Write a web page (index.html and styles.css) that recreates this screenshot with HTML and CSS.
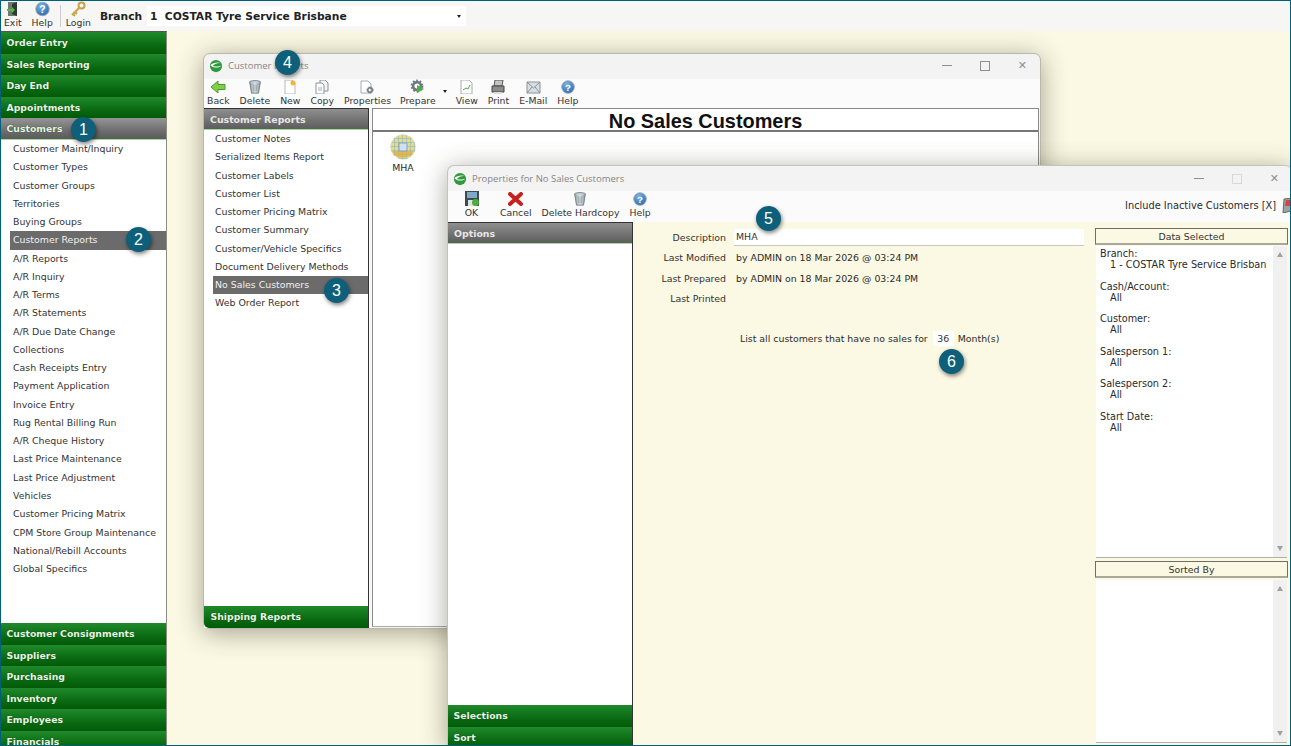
FILE: index.html
```html
<!DOCTYPE html>
<html lang="en">

<head>
    <meta charset="UTF-8" />
    <title>COSTAR Tyre Service</title>
    <link rel="stylesheet" href="styles.css">
</head>

<body>
    <svg width="0" height="0" class="defs">
        <defs>
            <radialGradient id="g-help" cx="40%" cy="30%" r="75%">
                <stop offset="0" stop-color="#7fb6e6" />
                <stop offset="1" stop-color="#2a68ad" />
            </radialGradient>
            <linearGradient id="g-trash" x1="0" x2="1" y1="0" y2="0">
                <stop offset="0" stop-color="#8f9ca1" />
                <stop offset=".5" stop-color="#dfe7ea" />
                <stop offset="1" stop-color="#87959a" />
            </linearGradient>
            <symbol id="i-help" viewBox="0 0 16 16">
                <circle cx="8" cy="8" r="7.200" fill="url(#g-help)" stroke="#9aa7b2" />
                <text x="8" y="12" text-anchor="middle" font-size="11" font-weight="bold" fill="#fff" font-family="Liberation Sans">?</text>
            </symbol>
            <symbol id="i-trash" viewBox="0 0 16 16">
                <ellipse cx="8" cy="2.500" rx="6.500" ry="1.800" fill="#c9d3d6" stroke="#6f7d82" />
                <path d="M2 3l2 12h8l2-12" fill="url(#g-trash)" stroke="#6f7d82" />
                <path d="M6 5l.5 8M10 5l-.5 8M8 5v8" stroke="#7c8a8f" stroke-width=".6" />
            </symbol>
            <symbol id="i-logo" viewBox="0 0 16 16">
                <circle cx="8" cy="8" r="7" fill="#2f9a3c" />
                <path d="M1.500 7c3-3 9-4 13-2-3-1-8 0-10 3 3 1 7 1 10-1-2 3-9 4-13 0z" fill="#fff" />
            </symbol>
            <symbol id="i-gear" viewBox="0 0 16 16">
                <circle cx="8" cy="8" r="4.500" fill="none" stroke="#6f7a80" stroke-width="3" />
                <circle cx="8" cy="8" r="6.300" fill="none" stroke="#6f7a80" stroke-width="2" stroke-dasharray="2 2" />
            </symbol>
        </defs>
    </svg>

    <div class="app">
        <div class="topbar">
            <div class="tool">
                <svg width="14" height="16" viewBox="0 0 14 16"><path d="M2 1h9v14H2z" fill="#6d7a70" /><path d="M6 3l5-2v14l-5-2z" fill="#2c3a30" /><path d="M1 8h5V6l3 3-3 3v-2H1z" fill="#56b848" /></svg>
                <span>Exit</span>
            </div>
            <div class="tool">
                <svg width="15" height="16"><use href="#i-help" /></svg>
                <span>Help</span>
            </div>
            <div class="top-sep"></div>
            <div class="tool">
                <svg width="16" height="16" viewBox="0 0 16 16"><circle cx="11.500" cy="4.500" r="3" fill="none" stroke="#c9a24a" stroke-width="2" /><path d="M9 7l-7 7M3 13l2 2M5 11l2 2" stroke="#c9a24a" stroke-width="2" fill="none" /></svg>
                <span>Login</span>
            </div>
            <div class="branch-label">Branch</div>
            <div class="branch-select">
                <span>1&nbsp; COSTAR Tyre Service Brisbane</span>
                <i class="arrow-down"></i>
            </div>
        </div>

        <div class="main">
            <div class="sidebar">
                <div class="nav-head">Order Entry</div>
                <div class="nav-head">Sales Reporting</div>
                <div class="nav-head">Day End</div>
                <div class="nav-head">Appointments</div>
                <div class="nav-head active">Customers</div>
                <div class="nav-list">
                    <div class="nav-item">Customer Maint/Inquiry</div>
                    <div class="nav-item">Customer Types</div>
                    <div class="nav-item">Customer Groups</div>
                    <div class="nav-item">Territories</div>
                    <div class="nav-item">Buying Groups</div>
                    <div class="nav-item selected">Customer Reports</div>
                    <div class="nav-item">A/R Reports</div>
                    <div class="nav-item">A/R Inquiry</div>
                    <div class="nav-item">A/R Terms</div>
                    <div class="nav-item">A/R Statements</div>
                    <div class="nav-item">A/R Due Date Change</div>
                    <div class="nav-item">Collections</div>
                    <div class="nav-item">Cash Receipts Entry</div>
                    <div class="nav-item">Payment Application</div>
                    <div class="nav-item">Invoice Entry</div>
                    <div class="nav-item">Rug Rental Billing Run</div>
                    <div class="nav-item">A/R Cheque History</div>
                    <div class="nav-item">Last Price Maintenance</div>
                    <div class="nav-item">Last Price Adjustment</div>
                    <div class="nav-item">Vehicles</div>
                    <div class="nav-item">Customer Pricing Matrix</div>
                    <div class="nav-item">CPM Store Group Maintenance</div>
                    <div class="nav-item">National/Rebill Accounts</div>
                    <div class="nav-item">Global Specifics</div>
                </div>
                <div class="nav-head">Customer Consignments</div>
                <div class="nav-head">Suppliers</div>
                <div class="nav-head">Purchasing</div>
                <div class="nav-head">Inventory</div>
                <div class="nav-head">Employees</div>
                <div class="nav-head">Financials</div>
            </div>
            <div class="desktop"></div>
        </div>

        <!-- Customer Reports window -->
        <div class="window win-reports">
            <div class="titlebar">
                <svg width="14" height="14"><use href="#i-logo" /></svg>
                <span class="win-title">Customer Reports</span>
                <div class="win-buttons">
                    <span class="win-min"></span><span class="win-max"></span><span class="win-close">&#10005;</span>
                </div>
            </div>
            <div class="toolbar">
                <div class="tool tool-back">
                    <svg width="16" height="14" viewBox="0 0 16 14"><path d="M8 1L1 7l7 6V9.500h7v-5H8z" fill="#7ed04a" stroke="#4f9a2c" /></svg>
                    <span>Back</span>
                </div>
                <div class="tool">
                    <svg width="14" height="14"><use href="#i-trash" /></svg>
                    <span>Delete</span>
                </div>
                <div class="tool">
                    <svg width="14" height="14" viewBox="0 0 14 14"><path d="M2 0h7l3 3v11H2z" fill="#fff" stroke="#b5b9bb" /><circle cx="10" cy="3" r="2.500" fill="#f2b53a" /></svg>
                    <span>New</span>
                </div>
                <div class="tool">
                    <svg width="14" height="14" viewBox="0 0 14 14"><path d="M5 0h5l3 3v8H5z" fill="#f2f4f5" stroke="#8d9498" /><path d="M1 3h6l2 2v9H1z" fill="#fff" stroke="#8d9498" /><path d="M3 8h4M3 10h4" stroke="#a8aeb2" /></svg>
                    <span>Copy</span>
                </div>
                <div class="tool">
                    <svg width="15" height="14" viewBox="0 0 15 14"><path d="M1 1h7l3 3v9H1z" fill="#fff" stroke="#a6acb0" /><svg x="6" y="6" width="8" height="8"><use href="#i-gear" /></svg></svg>
                    <span>Properties</span>
                </div>
                <div class="tool tool-prepare">
                    <svg width="16" height="15" viewBox="0 0 16 15"><svg width="14" height="14"><use href="#i-gear" /></svg><path d="M7 6l7 4-7 4z" fill="#4caf3c" /></svg>
                    <span>Prepare</span>
                    <i class="arrow-down prepare-arrow"></i>
                </div>
                <div class="tool">
                    <svg width="13" height="14" viewBox="0 0 13 14"><path d="M1 0h8l3 3v11H1z" fill="#fff" stroke="#a6acb0" /><path d="M3 10l3-2 2 1 2-4" stroke="#4caf3c" fill="none" /></svg>
                    <span>View</span>
                </div>
                <div class="tool">
                    <svg width="14" height="14" viewBox="0 0 14 14"><path d="M4 0h8l-1 6H3z" fill="#c4c4c0" stroke="#555" /><path d="M1 6h12v6H1z" fill="#8b8d8a" stroke="#444" /><path d="M3 12h8v2H3z" fill="#ddd" /></svg>
                    <span>Print</span>
                </div>
                <div class="tool">
                    <svg width="15" height="13" viewBox="0 0 15 13"><path d="M1 1h13v11H1z" fill="#d9dee2" stroke="#8a9299" /><path d="M1 1l6.500 6L14 1M1 12l5-6M14 12L9 6" fill="none" stroke="#8a9299" /></svg>
                    <span>E-Mail</span>
                </div>
                <div class="tool">
                    <svg width="14" height="14"><use href="#i-help" /></svg>
                    <span>Help</span>
                </div>
            </div>
            <div class="win-body">
                <div class="side-panel reports-panel">
                    <div class="panel-head">Customer Reports</div>
                    <div class="panel-list">
                        <div class="nav-item">Customer Notes</div>
                        <div class="nav-item">Serialized Items Report</div>
                        <div class="nav-item">Customer Labels</div>
                        <div class="nav-item">Customer List</div>
                        <div class="nav-item">Customer Pricing Matrix</div>
                        <div class="nav-item">Customer Summary</div>
                        <div class="nav-item">Customer/Vehicle Specifics</div>
                        <div class="nav-item">Document Delivery Methods</div>
                        <div class="nav-item selected">No Sales Customers</div>
                        <div class="nav-item">Web Order Report</div>
                    </div>
                    <div class="nav-head">Shipping Reports</div>
                </div>
                <div class="report-pane">
                    <div class="report-title">No Sales Customers</div>
                    <div class="report-icon">
                        <svg width="26" height="26" viewBox="0 0 26 26">
                            <defs>
                                <pattern id="grid" width="4" height="4" patternUnits="userSpaceOnUse">
                                    <rect width="4" height="4" fill="#e9d98c" />
                                    <path d="M0 0h4M0 0v4" stroke="#7fb3c9" />
                                </pattern>
                            </defs>
                            <circle cx="13" cy="13" r="12.500" fill="url(#grid)" />
                            <path d="M2 17a12.500 12.500 0 0 0 22 0z" fill="#dfae3a" opacity=".75" />
                            <rect x="9" y="9" width="8" height="8" fill="#cfe0ee" stroke="#7fa5c4" />
                        </svg>
                        <span>MHA</span>
                    </div>
                </div>
            </div>
        </div>

        <!-- Properties window -->
        <div class="window win-props">
            <div class="titlebar">
                <svg width="14" height="14"><use href="#i-logo" /></svg>
                <span class="win-title">Properties for No Sales Customers</span>
                <div class="win-buttons">
                    <span class="win-min"></span><span class="win-max faded"></span><span class="win-close">&#10005;</span>
                </div>
            </div>
            <div class="toolbar props-toolbar">
                <div class="tool tool-ok">
                    <svg width="14" height="15" viewBox="0 0 14 15"><path d="M0 0h14v15H0z" fill="#3c4a52" /><path d="M2 1h10v6H2z" fill="#7fa8c8" /><path d="M3 9h8v6H3z" fill="#dfe3e5" /><circle cx="10.500" cy="11.500" r="3.500" fill="#4caf3c" /></svg>
                    <span>OK</span>
                </div>
                <div class="tool">
                    <svg width="15" height="14" viewBox="0 0 15 14"><path d="M2 2l11 10M13 2L2 12" stroke="#c8201c" stroke-width="4" stroke-linecap="round" /></svg>
                    <span>Cancel</span>
                </div>
                <div class="tool">
                    <svg width="14" height="14"><use href="#i-trash" /></svg>
                    <span>Delete Hardcopy</span>
                </div>
                <div class="tool">
                    <svg width="14" height="14"><use href="#i-help" /></svg>
                    <span>Help</span>
                </div>
                <div class="include-inactive">
                    <span>Include Inactive Customers [X]</span>
                    <svg width="12" height="15" viewBox="0 0 12 15"><path d="M3 1l8-1-1 13-8 2z" fill="#9aa3a8" stroke="#666" /><path d="M5 2h5v6H4z" fill="#d8443c" /></svg>
                </div>
            </div>
            <div class="win-body props-body">
                <div class="side-panel options-panel">
                    <div class="panel-head">Options</div>
                    <div class="panel-list"></div>
                    <div class="nav-head">Selections</div>
                    <div class="nav-head">Sort</div>
                </div>
                <div class="props-form">
                    <div class="form-row">
                        <label>Description</label>
                        <input class="desc-input" type="text" value="MHA">
                    </div>
                    <div class="form-row">
                        <label>Last Modified</label>
                        <span>by ADMIN on 18 Mar 2026 @ 03:24 PM</span>
                    </div>
                    <div class="form-row">
                        <label>Last Prepared</label>
                        <span>by ADMIN on 18 Mar 2026 @ 03:24 PM</span>
                    </div>
                    <div class="form-row">
                        <label>Last Printed</label>
                    </div>
                    <div class="months-row">
                        <span>List all customers that have no sales for</span>
                        <input class="months-input" type="text" value="36">
                        <span>Month(s)</span>
                    </div>
                </div>
                <div class="data-column">
                    <div class="data-head">Data Selected</div>
                    <div class="data-box data-selected">
                        <div class="data-text">
                            <div class="data-group">Branch:<div class="data-value">1 - COSTAR Tyre Service Brisban</div></div>
                            <div class="data-group">Cash/Account:<div class="data-value">All</div></div>
                            <div class="data-group">Customer:<div class="data-value">All</div></div>
                            <div class="data-group">Salesperson 1:<div class="data-value">All</div></div>
                            <div class="data-group">Salesperson 2:<div class="data-value">All</div></div>
                            <div class="data-group">Start Date:<div class="data-value">All</div></div>
                        </div>
                        <div class="scroll"><i class="arrow-up"></i><i class="arrow-dn"></i></div>
                    </div>
                    <div class="data-head">Sorted By</div>
                    <div class="data-box data-sorted">
                        <div class="data-text"></div>
                        <div class="scroll"><i class="arrow-up"></i><i class="arrow-dn"></i></div>
                    </div>
                </div>
            </div>
        </div>

        <span class="badge b1">1</span>
        <span class="badge b2">2</span>
        <span class="badge b3">3</span>
        <span class="badge b4">4</span>
        <span class="badge b5">5</span>
        <span class="badge b6">6</span>
    </div>
</body>

</html>
```
FILE: styles.css
```css
html,
body {
    margin: 0;
    padding: 0;
    height: 100%;
    overflow: hidden;
}

body {
    font-family: "DejaVu Sans", Verdana, sans-serif;
    font-size: 9.400px;
    color: #2b2b2b;
}

.defs {
    position: absolute;
}

.app {
    position: relative;
    width: 1291px;
    height: 746px;
    box-sizing: border-box;
    border: 1px solid #00607a;
    overflow: hidden;
    display: flex;
    flex-direction: column;
    background-color: #fbf8e3;
}

/* top bar */
.topbar {
    height: 30px;
    background-color: #f6f6f4;
    display: flex;
    align-items: center;
    padding-left: 3px;
    flex-shrink: 0;
}

.tool {
    display: flex;
    flex-direction: column;
    align-items: center;
    justify-content: flex-end;
    line-height: 11px;
    color: #333;
    gap: 1px;
    padding: 0 5px;
    position: relative;
    font-size: 9.300px;
}

.topbar .tool {
    padding: 0;
    gap: 0;
    align-self: flex-start;
}

.topbar .tool + .tool {
    margin-left: 10px;
}

.top-sep {
    width: 1px;
    height: 22px;
    background-color: #ccc;
    margin: 0 5px 0 7px;
}

.branch-label {
    font-weight: bold;
    font-size: 10.700px;
    margin-left: 9px;
    color: #222;
    width: 47px;
}

.branch-select {
    width: 311px;
    height: 20px;
    padding: 0 5px 0 3px;
    background-color: #fff;
    display: flex;
    align-items: center;
    justify-content: space-between;
    font-size: 10.700px;
    font-weight: bold;
    color: #222;
}

.arrow-down {
    width: 0;
    height: 0;
    border-left: 2.500px solid transparent;
    border-right: 2.500px solid transparent;
    border-top: 3px solid #222;
}

.main {
    display: flex;
    flex: 1;
    min-height: 0;
}

/* sidebar */
.sidebar {
    width: 165px;
    border-right: 1px solid #8c8c80;
    border-top: 1px solid #555;
    display: flex;
    flex-direction: column;
    flex-shrink: 0;
    overflow: hidden;
}

.desktop {
    flex: 1;
}

.nav-head {
    height: 21.600px;
    line-height: 21px;
    box-sizing: border-box;
    padding-left: 5.500px;
    font-weight: bold;
    font-size: 9.300px;
    color: #e8f4e4;
    background: linear-gradient(#208a2c, #0a6a12 60%, #035a08);
    flex-shrink: 0;
    text-shadow: 0 0 1px #0a400e;
}

.nav-head.active {
    background: linear-gradient(#959595, #6e6e6e 60%, #5a5a5a);
    border-bottom: 1px solid #9fdc9a;
}

.nav-list {
    flex: none;
    height: 483px;
    background-color: #fff;
}

.nav-item {
    height: 18.280px;
    line-height: 17.500px;
    padding-left: 12px;
    color: #333;
    white-space: nowrap;
}

.nav-item.selected {
    background-color: #6b6b6b;
    color: #f0f0f0;
    margin-left: 9px;
    padding-left: 3px;
}

/* windows */
.window {
    position: absolute;
    display: flex;
    flex-direction: column;
    border-radius: 7px 7px 0 0;
    background-color: #f3f3f3;
    box-shadow: 0 4px 26px rgba(60, 60, 40, 0.45);
}

.win-reports {
    left: 202px;
    top: 52px;
    width: 838px;
    height: 576px;
    border-radius: 7px;
    border: 1px solid #b8b8ac;
    box-sizing: border-box;
}

.win-props {
    left: 446px;
    top: 164px;
    width: 845px;
    height: 582px;
    border: 1px solid #c4c4bc;
    border-right: 0;
    border-bottom: 0;
    box-sizing: border-box;
}

.titlebar {
    height: 25px;
    display: flex;
    align-items: center;
    padding-left: 5px;
    gap: 5px;
    flex-shrink: 0;
}

.win-reports .titlebar {
    padding-bottom: 2px;
    height: 23px;
}

.win-title {
    color: #868686;
    font-family: "Open Sans", sans-serif;
    font-size: 9.500px;
}

.win-buttons {
    margin-left: auto;
    display: flex;
    align-items: center;
    gap: 28px;
    padding-right: 13px;
}

.win-min {
    width: 10px;
    height: 1px;
    background-color: #8f8f8f;
}

.win-max {
    width: 8px;
    height: 8px;
    border: 1px solid #8f8f8f;
}

.win-max.faded {
    border-color: #d8d8d8;
}

.win-close {
    font-size: 11px;
    color: #8f8f8f;
    line-height: 11px;
}

.toolbar {
    height: 29px;
    display: flex;
    align-items: flex-end;
    background-color: #fbfbfb;
    flex-shrink: 0;
}

.toolbar .tool {
    padding: 0 5px 2px;
}

.toolbar .tool-back {
    padding-left: 3px;
}

.toolbar .tool-prepare {
    margin-left: -1px;
    margin-right: 10px;
}

.prepare-arrow {
    position: absolute;
    right: -6px;
    top: 11px;
}

.win-body {
    flex: 1;
    display: flex;
    min-height: 0;
    background-color: #f7f7f5;
}

.side-panel {
    display: flex;
    flex-direction: column;
    background-color: #fff;
    border: 1px solid #333;
    border-left: 0;
    border-bottom: 0;
    box-sizing: border-box;
    flex-shrink: 0;
}

.reports-panel {
    width: 165px;
    border-radius: 0 0 0 5px;
    overflow: hidden;
}

.reports-panel .nav-head {
    height: 22px;
    line-height: 22px;
    padding-left: 6.500px;
}

.panel-head {
    height: 21px;
    line-height: 21.500px;
    box-sizing: border-box;
    padding-left: 6px;
    font-weight: bold;
    font-size: 9.400px;
    color: #e6e6e6;
    background: linear-gradient(#8f8f8f, #5c5c5c);
    border-bottom: 1px solid #9fdc9a;
    flex-shrink: 0;
}

.panel-list {
    flex: 1;
    min-height: 0;
}

.panel-list .nav-item {
    padding-left: 11px;
    line-height: 18px;
}

.panel-list .nav-item.selected {
    margin-left: 9px;
    padding-left: 2px;
}

.report-pane {
    flex: 1;
    margin: 0 1px 1px 3px;
    background-color: #fff;
    border: 1px solid #888;
    border-bottom: 1px solid #aaa;
}

.report-title {
    height: 21px;
    line-height: 24px;
    text-align: center;
    font-family: "Liberation Sans", Arial, sans-serif;
    font-weight: bold;
    font-size: 19.900px;
    color: #111;
    border-bottom: 2px solid #777;
}

.report-icon {
    width: 58px;
    margin: 2px 0 0 1px;
    display: flex;
    flex-direction: column;
    align-items: center;
    gap: 2px;
}

/* properties */
.props-toolbar {
    height: 31px;
}

.toolbar .tool-ok {
    width: 37px;
    box-sizing: content-box;
}

.props-toolbar .tool {
    padding-bottom: 4px;
}

.include-inactive {
    margin-left: auto;
    margin-right: -1px;
    display: flex;
    align-items: center;
    gap: 5px;
    padding-bottom: 9px;
    font-size: 9.800px;
}

.props-body {
    background-color: #fbf8e3;
}

.options-panel {
    width: 185px;
    margin-bottom: -2px;
}

.options-panel .nav-head {
    height: 22px;
}

.props-form {
    width: 462px;
    flex-shrink: 0;
    padding-top: 5px;
    box-sizing: border-box;
}

.form-row {
    height: 20.500px;
    display: flex;
    align-items: center;
    gap: 10px;
}

.form-row label {
    width: 93px;
    text-align: right;
    color: #333;
}

.desc-input {
    width: 350px;
    height: 17px;
    box-sizing: border-box;
    border: 0;
    border-bottom: 1px solid #c8c8c0;
    padding: 0 2px;
    margin-left: -2px;
    font: inherit;
    color: #333;
    background-color: #fff;
    outline: none;
}

.months-row {
    margin-top: 22px;
    padding-left: 107px;
    display: flex;
    align-items: center;
    gap: 3px;
}

.months-input {
    width: 21px;
    height: 15px;
    box-sizing: border-box;
    border: 0;
    padding: 0;
    margin: 0 1px 0 2px;
    text-align: center;
    font: inherit;
    color: #333;
    background-color: #fff;
    outline: none;
}

.data-column {
    width: 193px;
    padding-top: 6px;
    display: flex;
    flex-direction: column;
    flex-shrink: 0;
}

.data-head {
    height: 17px;
    line-height: 15px;
    box-sizing: border-box;
    text-align: center;
    border: 1px solid #6f6f66;
    border-bottom-width: 2px;
    border-bottom-color: #a8a89c;
    color: #333;
    flex-shrink: 0;
    background-color: #fbf8e3;
}

.data-box {
    display: flex;
    background-color: #fff;
    margin: 1px 1px 3px;
    border-bottom: 1px solid #b0b0a8;
    flex-shrink: 0;
    box-sizing: border-box;
}

.data-selected {
    height: 312px;
}

.data-sorted {
    height: 163px;
    margin: 2px 1px 0;
}

.data-text {
    flex: 1;
    padding: 2px 0 0 4px;
    line-height: 11px;
    font-size: 9.700px;
    overflow: hidden;
    white-space: nowrap;
}

.data-group {
    margin-bottom: 10.500px;
}

.data-value {
    padding-left: 10px;
}

.scroll {
    width: 14px;
    background-color: #f0f0f0;
    display: flex;
    flex-direction: column;
    justify-content: space-between;
    align-items: center;
    padding: 6px 0;
    flex-shrink: 0;
}

.arrow-up {
    border-left: 3.500px solid transparent;
    border-right: 3.500px solid transparent;
    border-bottom: 5px solid #a0a0a0;
}

.arrow-dn {
    border-left: 3.500px solid transparent;
    border-right: 3.500px solid transparent;
    border-top: 5px solid #a0a0a0;
}

/* numbered callouts */
.badge {
    position: absolute;
    width: 25px;
    height: 25px;
    border-radius: 50%;
    background-color: #0d5f7a;
    color: #fff;
    font-family: "Liberation Sans", Arial, sans-serif;
    font-size: 16px;
    line-height: 25px;
    text-align: center;
    box-shadow: 1px 2px 4px rgba(0, 0, 0, 0.5);
}

.b1 { left: 70px; top: 116px; }
.b2 { left: 125px; top: 226px; }
.b3 { left: 323px; top: 277px; }
.b4 { left: 274px; top: 49px; }
.b5 { left: 755px; top: 205px; }
.b6 { left: 938px; top: 348px; }
```
